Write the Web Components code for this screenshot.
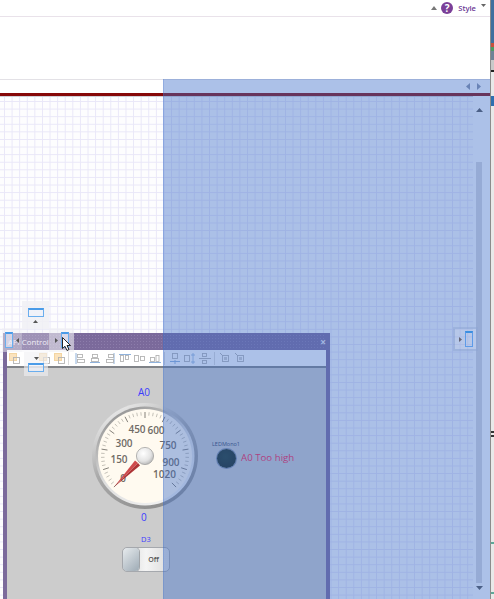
<!DOCTYPE html>
<html>
<head>
<meta charset="utf-8">
<style>
  html, body { margin: 0; height: 100%; overflow: hidden; background: #fff; }
  body { font-family: "Open Sans", sans-serif; }
</style>
</head>
<body>
<designer-shell></designer-shell>
<script>
(function () {
  // small helper so each element only has to give its css and markup
  function shadow(el, html) {
    let root = el.attachShadow({ mode: 'open' });
    root.innerHTML = html;
    return root;
  }

  class RibbonBar extends HTMLElement {
    constructor() {
      super();
      shadow(this, `
      <style>
        :host { display: flex; flex: none; height: 17px; align-items: center; justify-content: flex-end; gap: 5px; box-sizing: border-box; padding-right: 4px; border-bottom: 1px solid #e9e2ea; background: #fff; font: 600 7.6px "Open Sans", sans-serif; color: #6b3a96; }
        svg { display: block; }
        .help { width: 12px; height: 12px; border-radius: 50%; background: #7b3f98; color: #fff; font: bold 10px/12px "Open Sans", sans-serif; text-align: center; }
      </style>
      <svg width="6" height="4" style="margin-right:-1px"><path d="M0 4L3 0L6 4z" fill="#777"/></svg>
      <div class="help">?</div>
      <span>Style</span>
      <svg width="5" height="3" style="margin-bottom:5px"><path d="M0 0H5L2.5 3z" fill="#666"/></svg>`);
    }
  }

  class DocTabs extends HTMLElement {
    constructor() {
      super();
      shadow(this, `
      <style>
        :host { display: flex; flex: none; height: 14px; align-items: center; justify-content: flex-end; gap: 7px; padding-right: 9px; box-sizing: border-box; background: #fff; border-top: 1px solid #e3e1e6; }
      </style>
      <svg width="4" height="7"><path d="M4 0V7L0 3.5z" fill="#8a93a8"/></svg>
      <svg width="4" height="7"><path d="M0 0V7L4 3.5z" fill="#8a93a8"/></svg>`);
    }
  }

  class GridCanvas extends HTMLElement {
    constructor() {
      super();
      shadow(this, `
      <style>
        :host { display: flex; flex: 1; min-height: 0; border-top: 3px solid #860808; background: #fff; }
        .grid { flex: 1; background-color: #fdfdfe; box-shadow: inset 0 1px 0 #cfcfd6;
          background-image: linear-gradient(#e9e7f8 1px, transparent 1px), linear-gradient(90deg, #e9e7f8 1px, transparent 1px);
          background-size: 7.6px 7.6px; background-position: 4px 5px; }
        .bar { flex: none; width: 17px; position: relative; background: #fff; }
        .thumb { position: absolute; left: 3px; right: 8px; top: 66px; bottom: 16px; background: #d9d9dd; }
        svg { position: absolute; left: 3px; }
      </style>
      <div class="grid"></div>
      <div class="bar">
        <svg width="7" height="4" style="top:12px"><path d="M0 4L3.5 0L7 4z" fill="#555"/></svg>
        <div class="thumb"></div>
        <svg width="7" height="4" style="bottom:9px"><path d="M0 0H7L3.5 4z" fill="#555"/></svg>
      </div>`);
    }
  }

  class RadialGauge extends HTMLElement {
    constructor() {
      super();
      // scale runs over 270 degrees, from lower left to lower right
      let ticks = '';
      for (let i = 0; i <= 50; i++) {
        let a = (135 + i * 5.4) * Math.PI / 180;
        let major = i % 5 === 0;
        let r1 = major ? 38 : 40.5;
        let r2 = 44;
        ticks += `<line x1="${(Math.cos(a) * r1).toFixed(2)}" y1="${(Math.sin(a) * r1).toFixed(2)}" x2="${(Math.cos(a) * r2).toFixed(2)}" y2="${(Math.sin(a) * r2).toFixed(2)}" stroke="${major ? '#85817a' : '#aaa79f'}" stroke-width="${major ? 1 : 0.7}"/>`;
      }
      let labels = [['450', -8, -27], ['600', 11, -25.5], ['300', -21, -13], ['750', 23, -10.5], ['150', -26, 3], ['900', 26, 6], ['1020', 19.5, 18.5], ['0', -22, 22.5]];
      let texts = labels.map(l => `<text x="${l[1]}" y="${l[2]}" dy="3.6">${l[0]}</text>`).join('');
      shadow(this, `
      <style>
        :host { display: block; width: 108px; height: 108px; }
        svg { display: block; }
        text { font: 600 10px "Open Sans", sans-serif; fill: #6f6b66; text-anchor: middle; }
      </style>
      <svg width="108" height="108" viewBox="-54 -54 108 108">
        <defs>
          <linearGradient id="rim" x1="0.2" y1="0" x2="0.8" y2="1">
            <stop offset="0" stop-color="#efefef"/><stop offset="0.45" stop-color="#a9a9a9"/><stop offset="1" stop-color="#8a8a8a"/>
          </linearGradient>
          <linearGradient id="rim2" x1="0.2" y1="0" x2="0.8" y2="1">
            <stop offset="0" stop-color="#8f8f8f"/><stop offset="0.5" stop-color="#dcdcdc"/><stop offset="1" stop-color="#f4f4f4"/>
          </linearGradient>
          <radialGradient id="hub" cx="0.4" cy="0.35" r="0.75">
            <stop offset="0" stop-color="#fff"/><stop offset="0.6" stop-color="#e3e3e3"/><stop offset="1" stop-color="#a8a8a8"/>
          </radialGradient>
        </defs>
        <circle r="53" fill="url(#rim)"/>
        <circle r="49.5" fill="url(#rim2)"/>
        <circle r="47" fill="#fffaf0"/>
        ${ticks}
        ${texts}
        <path d="M-31 31L-10 4.5L-7 7z" fill="#cf4a4c"/>
        <path d="M-31 31L-7 7L-5 9.5z" fill="#ad3335"/>
        <circle r="8.6" fill="url(#hub)" stroke="#9a9a9a" stroke-width="0.7"/>
      </svg>`);
    }
  }

  class LedLamp extends HTMLElement {
    constructor() {
      super();
      shadow(this, `
      <style>
        :host { display: flex; flex-direction: column; align-items: center; gap: 1px; width: 30px; font: 5.5px/7px "Open Sans", sans-serif; color: #35415f; white-space: nowrap; }
        .lamp { width: 19px; height: 19px; border-radius: 50%; background: radial-gradient(circle at 45% 40%, #1d3628, #14241a 75%); box-shadow: 0 0 0 1px #7d8ba4; }
      </style>
      <span>LEDMono1</span>
      <div class="lamp"></div>`);
    }
  }

  class ToggleSwitch extends HTMLElement {
    constructor() {
      super();
      shadow(this, `
      <style>
        :host { display: flex; box-sizing: border-box; width: 48px; height: 25px; border: 1px solid #a5a8ad; border-radius: 5px; background: linear-gradient(90deg, #d6d6d6, #f4f4f4 50%, #dcdcdc); overflow: hidden; font: 600 7px "Open Sans", sans-serif; color: #555; }
        .knob { flex: none; width: 16px; border-radius: 4px; background: linear-gradient(135deg, #e7ebee, #9eabb5); box-shadow: 0 0 0 1px #a0a4a8; }
        .lbl { flex: 1; display: flex; align-items: center; justify-content: center; padding-right: 1px; }
      </style>
      <div class="knob"></div>
      <div class="lbl"><slot></slot></div>`);
    }
  }

  class ToolStrip extends HTMLElement {
    constructor() {
      super();
      // alignment buttons are only faint grey/blue glyphs at this size
      const box = (x, y, w, h, c) => `<rect x="${x}" y="${y}" width="${w}" height="${h}" fill="none" stroke="${c}" stroke-width="0.9"/>`;
      const g = '#b4b4b4', b = '#8fb2dc', o = '#f3d5a2';
      const cell = (w, inner) => `<b><svg width="${w}" height="11">${inner}</svg></b>`;
      const pair = cell(11, `<rect x="0.5" y="0.5" width="7" height="7" fill="#fbe3bd" stroke="${o}"/>${box(4.5, 4.5, 6, 6, g)}`);
      const alignA = cell(10, `<path d="M1 0V11" stroke="${b}"/>${box(2.5, 1.5, 5, 3, g)}${box(2.5, 6.5, 7, 3, g)}`);
      const alignB = cell(10, `<path d="M0 9.5H10" stroke="${b}"/>${box(2.5, 1.5, 5, 3, g)}${box(1.5, 5.5, 7, 3, g)}`);
      const alignC = cell(10, `<path d="M9 0V11" stroke="${b}"/>${box(3.5, 1.5, 5, 3, g)}${box(1.5, 6.5, 7, 3, g)}`);
      const alignD = cell(12, `<path d="M0 1.5H12" stroke="${b}"/>${box(1.5, 2.5, 3, 6, g)}${box(6.5, 2.5, 3, 4, g)}`);
      const alignE = cell(11, `${box(0.5, 2.5, 4, 6, g)}${box(6.5, 3.5, 4, 4, g)}`);
      const alignF = cell(12, `<path d="M0 9.5H12" stroke="${b}"/>${box(1.5, 4.5, 4, 4, g)}${box(7, 2.5, 3, 6, g)}`);
      const spread = cell(12, `${box(3.5, 0.5, 5, 5, g)}<path d="M1 8.5H11M6 7V11" stroke="${b}"/>`);
      const tall = cell(12, `${box(0.5, 2.5, 5, 6, g)}<path d="M9 0V11M7 2H11M7 9H11" stroke="${b}" stroke-width="0.8"/>`);
      const cross = cell(12, `${box(3.5, 0.5, 4, 3, g)}${box(3.5, 7.5, 4, 3, g)}<path d="M0 5.5H12" stroke="${g}"/>`);
      const size = cell(10, `${box(2.5, 2.5, 6, 6, g)}<rect x="4" y="4" width="3" height="3" fill="#cfcfcf"/><path d="M0 0L3 3" stroke="${g}"/>`);
      shadow(this, `
      <style>
        :host { display: flex; flex: none; height: 16px; align-items: center; background: #fff; border-bottom: 2px solid #7f8287; }
        b { flex: none; width: 15px; display: flex; justify-content: center; }
        svg { display: block; flex: none; filter: blur(.25px); }
        i { flex: none; width: 1px; height: 13px; margin: 0 2px; background: #dcdcdc; }
      </style>
      ${pair}<span style="flex:none;width:15px"></span>${pair}${pair}
      <i style="margin:0 3px 0 1px"></i>
      ${alignA}${alignB}${alignC}${alignD}${alignE}${alignF}<i></i>
      ${spread}${tall}${cross}<i></i>${size}${size}`);
    }
  }

  class ControlWindow extends HTMLElement {
    constructor() {
      super();
      shadow(this, `
      <style>
        :host { position: absolute; left: 3px; top: 333px; width: 327px; height: 280px; box-sizing: border-box; display: flex; flex-direction: column; border: 1px solid #7b6a9b; border-width: 1px 4px 0 4px; background: #7b6a9b; }
        .title { flex: none; height: 16px; display: flex; align-items: center; justify-content: space-between; padding: 0 0 0 1px; color: #f0ecf5; font: 7.8px "Open Sans", sans-serif; background-image: radial-gradient(#8d7dab 0.6px, transparent 0.7px); background-size: 3px 3px; }
        .close { font: bold 10px/10px "Open Sans", sans-serif; }
        .body { flex: 1; display: flex; flex-direction: column; min-height: 0; }
        .panel { flex: 1; position: relative; background: #cccccc; }
        .c { position: absolute; color: #3b3bff; font: 10px/12px "Open Sans", sans-serif; }
        radial-gauge { position: absolute; left: 84px; top: 34px; }
        led-lamp { position: absolute; left: 204px; top: 73px; }
        toggle-switch { position: absolute; left: 115px; top: 179px; }
        .msg { position: absolute; left: 234px; top: 83px; font: 9.7px/14px "Open Sans", sans-serif; color: #ff1a4a; white-space: nowrap; }
      </style>
      <div class="title"><span>API Control</span><span class="close">×</span></div>
      <div class="body">
        <tool-strip></tool-strip>
        <div class="panel">
          <span class="c" style="left:131px;top:18px">A0</span>
          <radial-gauge></radial-gauge>
          <span class="c" style="left:134px;top:143px">0</span>
          <led-lamp></led-lamp>
          <span class="msg">A0 Too high</span>
          <span class="c" style="left:134px;top:165px;font-size:7.5px">D3</span>
          <toggle-switch>Off</toggle-switch>
        </div>
      </div>`);
    }
  }

  // dock target: blue miniature window
  function dockPane(w, h, thick) {
    return `<div style="width:${w}px;height:${h}px;box-sizing:border-box;border:1px solid #6aaeee;border-top:${thick}px solid #4a9be8;background:rgba(238,243,251,.55)"></div>`;
  }

  class DockCompass extends HTMLElement {
    constructor() {
      super();
      shadow(this, `
      <style>
        :host { position: absolute; left: 0; top: 301px; width: 76px; height: 76px; display: block; }
        .cell { position: absolute; display: flex; align-items: center; justify-content: center; gap: 3px; background: rgba(240,240,244,.6); }
        .t { left: 22px; top: 0; width: 27px; height: 28px; flex-direction: column; background: rgba(240,240,244,.85); }
        .b { left: 24px; top: 51px; width: 24px; height: 24px; flex-direction: column; }
        .l { left: 2px; top: 27px; width: 20px; height: 24px; background: rgba(240,240,244,.5); }
        .m { left: 22px; top: 28px; width: 27px; height: 23px; background: rgba(240,240,244,.3); }
        .r { left: 49px; top: 27px; width: 25px; height: 24px; }
        svg { display: block; }
      </style>
      <div class="cell t">${dockPane(16, 9, 2)}<svg width="5" height="3"><path d="M0 3L2.5 0L5 3z" fill="#555"/></svg></div>
      <div class="cell l">${dockPane(8, 16, 2)}<svg width="3" height="5"><path d="M3 0V5L0 2.5z" fill="#555"/></svg></div>
      <div class="cell m"></div>
      <div class="cell r"><svg width="3" height="5"><path d="M0 0V5L3 2.5z" fill="#555"/></svg>${dockPane(8, 16, 2)}</div>
      <div class="cell b"><svg width="5" height="3"><path d="M0 0H5L2.5 3z" fill="#555"/></svg>${dockPane(16, 9, 2)}</div>`);
    }
  }

  class DockOverlay extends HTMLElement {
    constructor() {
      super();
      shadow(this, `
      <style>
        :host { position: absolute; left: 163px; top: 79px; right: 4px; bottom: 0; display: block; background: rgba(62,111,202,.43); box-shadow: inset 1px 0 0 rgba(62,111,202,.25); }
        .hint { position: absolute; right: 12px; top: 248px; width: 25px; height: 24px; box-sizing: border-box; display: flex; align-items: center; justify-content: center; gap: 3px; background: rgba(240,240,244,.18); border: 2px solid rgba(110,140,200,.35); }
        .pane { width: 8px; height: 16px; box-sizing: border-box; border: 1px solid #5d9be8; border-top: 2px solid #3b8fe0; }
      </style>
      <div class="hint"><svg width="3" height="5"><path d="M0 0V5L3 2.5z" fill="#667"/></svg><div class="pane"></div></div>`);
    }
  }

  // sliver of the next window showing at the right of the screenshot
  class WindowEdge extends HTMLElement {
    constructor() {
      super();
      shadow(this, `
      <style>
        :host { display: flex; flex-direction: column; flex: none; width: 4px; box-sizing: border-box; border-left: 1px solid #8c8c8c; background: #e9e9e9; }
        div { flex: none; }
      </style>
      <div style="height:43px;background:#3f6f9e"></div>
      <div style="height:8px;background:linear-gradient(#c8503c 50%,#4d9a62 50%)"></div>
      <div style="height:9px;background:#6f8296"></div>
      <div style="height:10px;background:#c9c9c9"></div>
      <div style="height:2px;background:#222"></div>
      <div style="height:24px"></div>
      <div style="height:10px;background:#2f6fb0"></div>
      <div style="height:325px"></div>
      <div style="height:2px;background:#333"></div>
      <div style="height:2px"></div>
      <div style="height:2px;background:#333"></div>
      <div style="height:105px"></div>
      <div style="height:2px;background:#5da898"></div>
      <div style="height:48px"></div>
      <div style="height:2px;background:#5da898"></div>`);
    }
  }

  class DesignerShell extends HTMLElement {
    constructor() {
      super();
      shadow(this, `
      <style>
        :host { display: flex; position: relative; width: 494px; height: 599px; overflow: hidden; background: #fff; }
        .main { flex: 1; min-width: 0; display: flex; flex-direction: column; }
        .blank { flex: none; height: 62px; background: #fff; }
        svg.cursor { position: absolute; left: 62px; top: 337px; }
      </style>
      <div class="main">
        <ribbon-bar></ribbon-bar>
        <div class="blank"></div>
        <doc-tabs></doc-tabs>
        <grid-canvas></grid-canvas>
      </div>
      <window-edge></window-edge>
      <control-window></control-window>
      <dock-compass></dock-compass>
      <dock-overlay></dock-overlay>
      <svg class="cursor" width="10" height="15"><path d="M.5 .5V11.5L3 9.3L5 13.5L7 12.5L5 8.5H8.5z" fill="#fff" stroke="#111" stroke-width=".9"/></svg>`);
    }
  }

  customElements.define('ribbon-bar', RibbonBar);
  customElements.define('doc-tabs', DocTabs);
  customElements.define('grid-canvas', GridCanvas);
  customElements.define('radial-gauge', RadialGauge);
  customElements.define('led-lamp', LedLamp);
  customElements.define('toggle-switch', ToggleSwitch);
  customElements.define('tool-strip', ToolStrip);
  customElements.define('control-window', ControlWindow);
  customElements.define('dock-compass', DockCompass);
  customElements.define('dock-overlay', DockOverlay);
  customElements.define('window-edge', WindowEdge);
  customElements.define('designer-shell', DesignerShell);
})();
</script>
</body>
</html>
